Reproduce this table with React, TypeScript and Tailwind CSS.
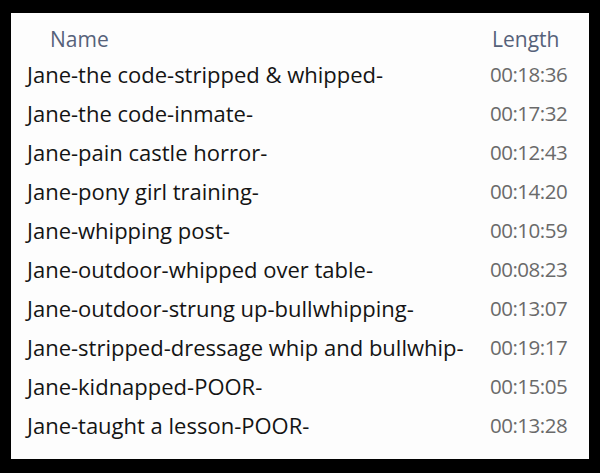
const rows: [string, string][] = [
  ["Jane-the code-stripped & whipped-", "00:18:36"],
  ["Jane-the code-inmate-", "00:17:32"],
  ["Jane-pain castle horror-", "00:12:43"],
  ["Jane-pony girl training-", "00:14:20"],
  ["Jane-whipping post-", "00:10:59"],
  ["Jane-outdoor-whipped over table-", "00:08:23"],
  ["Jane-outdoor-strung up-bullwhipping-", "00:13:07"],
  ["Jane-stripped-dressage whip and bullwhip-", "00:19:17"],
  ["Jane-kidnapped-POOR-", "00:15:05"],
  ["Jane-taught a lesson-POOR-", "00:13:28"],
];

export default function App() {
  return (
    <div className="w-[600px] h-[473px] bg-black pt-[13px] pl-[11px] pr-[11px] pb-[14px]">
      <div
        className="h-full bg-[#fdfdfd] pt-[12px] pl-[16px] pr-[21px]"
        style={{ fontFamily: '"Open Sans", "Noto Sans", sans-serif' }}
      >
        <div className="flex items-center h-[30px] text-[21px] text-[#56627a]">
          <span className="flex-1 pl-[23px]">Name</span>
          <span className="w-[78px] pl-[2px]">Length</span>
        </div>
        {rows.map(([name, len]) => (
          <div key={name} className="flex items-center h-[39px]">
            <span className="flex-1 text-[22px] text-[#141414] whitespace-nowrap">{name}</span>
            <span className="w-[78px] text-[20.5px] text-[#6a6a6a] tracking-[-0.5px]">{len}</span>
          </div>
        ))}
      </div>
    </div>
  );
}
